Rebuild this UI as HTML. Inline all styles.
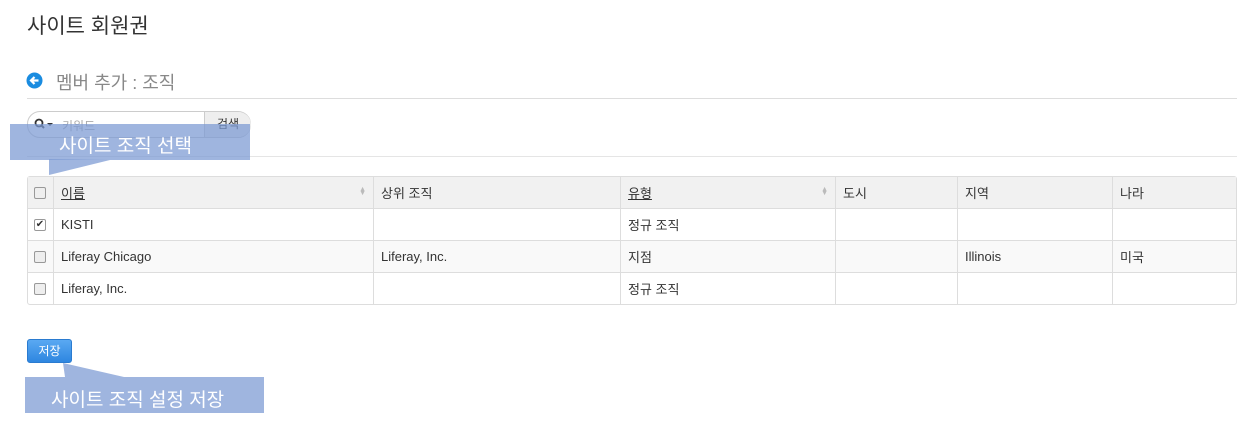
<!DOCTYPE html><html><head><meta charset="utf-8"><style>
body{margin:0;width:1242px;height:447px;background:#fff;font-family:"Liberation Sans","Noto Sans CJK KR",sans-serif;position:relative;overflow:hidden;color:#333}
.a{position:absolute}
table{border-collapse:separate;border-spacing:0;position:absolute;left:27px;top:176px;width:1210px;border:1px solid #ddd;border-radius:3px;font-size:13px}
td{height:32px;border-left:1px solid #ddd;border-top:1px solid #ddd;padding:0 7px;box-sizing:border-box}
tr:first-child td{border-top:none;background:#f1f1f1;height:31px}
td:first-child{border-left:none;width:25px;padding:0 0 0 6px}
tr:nth-child(3) td{background:#f9f9f9}
.cb{width:10px;height:10px;border:1px solid #999;border-radius:2px;background:#eee;font-size:10px;line-height:10px;text-align:center}
u{text-decoration:underline}
.s{float:right;color:#bbb;font-size:7px;line-height:4px;margin-top:5px;text-align:center}
</style></head><body>
<div class="a" style="left:27px;top:10px;font-size:21px;color:#333">사이트 회원권</div>
<svg class="a" style="left:26px;top:72px" width="17" height="17"><circle cx="8.5" cy="8.5" r="8" fill="#1a8ce0"/><path d="M12.5 8.5H5M8.5 5L5 8.5 8.5 12" stroke="#fff" stroke-width="2.2" fill="none"/></svg>
<div class="a" style="left:56px;top:69px;font-size:18px;color:#888">멤버 추가 : 조직</div>
<div class="a" style="left:27px;top:98px;width:1210px;height:1px;background:#ddd"></div>
<div class="a" style="left:27px;top:111px;width:222px;height:25px;border:1px solid #ccc;border-radius:13px;background:#fff"></div>
<div class="a" style="left:204px;top:112px;width:46px;height:25px;background:#eee;border-left:1px solid #ccc;border-radius:0 13px 13px 0;font-size:12px;line-height:25px;text-align:center">검색</div>
<svg class="a" style="left:34px;top:118px" width="20" height="12"><circle cx="5" cy="5" r="3.5" stroke="#333" stroke-width="1.8" fill="none"/><path d="M7.5 7.5L10 10" stroke="#333" stroke-width="2"/><path d="M13 5H19L16 8Z" fill="#333"/></svg>
<div class="a" style="left:62px;top:117px;font-size:12px;color:#aaa">키워드</div>
<div class="a" style="left:27px;top:156px;width:1210px;height:1px;background:#e5e5e5"></div>
<div class="a" style="left:10px;top:124px;width:240px;height:36px;background:rgba(122,152,210,0.72)"></div>
<svg class="a" style="left:48px;top:159px" width="70" height="17"><path d="M1 0V16L62 1Z" fill="rgba(122,152,210,0.72)"/></svg>
<div class="a" style="left:59px;top:131px;font-size:19px;color:#fff">사이트 조직 선택</div>
<table>
<tr><td><div class="cb"></div></td><td style="width:320px"><u>이름</u><span class="s">▲<br>▼</span></td><td style="width:247px">상위 조직</td><td style="width:215px"><u>유형</u><span class="s">▲<br>▼</span></td><td style="width:122px">도시</td><td style="width:155px">지역</td><td>나라</td></tr>
<tr><td><div class="cb" style="background:#fff">✔</div></td><td>KISTI</td><td></td><td>정규 조직</td><td></td><td></td><td></td></tr>
<tr><td><div class="cb"></div></td><td>Liferay Chicago</td><td>Liferay, Inc.</td><td>지점</td><td></td><td>Illinois</td><td>미국</td></tr>
<tr><td><div class="cb"></div></td><td>Liferay, Inc.</td><td></td><td>정규 조직</td><td></td><td></td><td></td></tr>
</table>
<div class="a" style="left:27px;top:339px;width:45px;height:24px;background:linear-gradient(#5aa9f2,#2e86e0);border:1px solid #2a7bd0;border-radius:3px;box-sizing:border-box;color:#fff;font-size:12px;line-height:22px;text-align:center">저장</div>
<div class="a" style="left:25px;top:377px;width:239px;height:36px;background:rgba(122,152,210,0.72)"></div>
<svg class="a" style="left:62px;top:363px" width="70" height="15"><path d="M1 0L3 14H62Z" fill="rgba(122,152,210,0.72)"/></svg>
<div class="a" style="left:51px;top:385px;font-size:19px;color:#fff">사이트 조직 설정 저장</div>
</body></html>
